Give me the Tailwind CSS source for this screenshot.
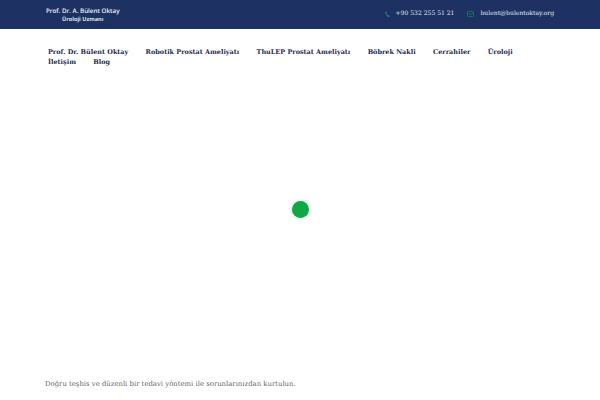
<!DOCTYPE html>
<html lang="tr">
<head>
    <meta charset="UTF-8">
    <title>Prof. Dr. A. Bülent Oktay</title>
    <script src="https://cdn.jsdelivr.net/npm/@tailwindcss/browser@4"></script>
</head>
<body class="bg-white w-[600px] h-[400px] overflow-hidden flex flex-col font-['DejaVu_Serif',serif] [text-rendering:geometricPrecision]">
    <header class="h-[29px] shrink-0 bg-[#1d3263] flex items-center justify-between pl-[46px] pr-[46px]">
        <div class="flex flex-col items-center text-white font-['Open_Sans',sans-serif] font-semibold mt-[-1px]">
            <span class="text-[6.250px] leading-[9px] text-[#eef1f6]">Prof. Dr. A. Bülent Oktay</span>
            <span class="text-[5.600px] leading-[8px] font-bold text-[#dfe4ee]">Üroloji Uzmanı</span>
        </div>
        <div class="flex items-center gap-[13px] text-[6.050px] text-[#e3e7f0] mt-[-1px]">
            <div class="flex items-center gap-[6px]">
                <svg class="w-[5px] h-[6px]" viewBox="0 0 10 12" fill="#1a8a62"><path d="M2.2 0.5 4 3.600 2.800 5c.5 1.500 1.400 2.800 2.800 3.800L7.400 8l2.100 2.800c-.8 1-2 1.500-3.200 1C3 10.300.6 6.500.7 2.500.8 1.500 1.300.8 2.200.5z"/></svg>
                <span>+90 532 255 51 21</span>
            </div>
            <div class="flex items-center gap-[6px]">
                <svg class="w-[7px] h-[6px]" viewBox="0 0 14 12" fill="none" stroke="#1a8a62" stroke-width="1.300"><rect x="1" y="1" width="12" height="10" rx="1.500"/><path d="M1 3.500 7 7.500 13 3.500"/></svg>
                <span>bulent@bulentoktay.org</span>
            </div>
        </div>
    </header>
    <nav class="pl-[48px] pr-[80px] pt-[18px] flex flex-wrap gap-x-[17.300px] text-[6.480px] leading-[10px] font-bold text-[#1d2a4d]">
        <a>Prof. Dr. Bülent Oktay</a>
        <a>Robotik Prostat Ameliyatı</a>
        <a>ThuLEP Prostat Ameliyatı</a>
        <a>Böbrek Nakli</a>
        <a>Cerrahiler</a>
        <a>Üroloji</a>
        <a>İletişim</a>
        <a>Blog</a>
    </nav>
    <main class="flex-1 flex items-center justify-center">
        <div class="w-[17px] h-[17px] rounded-full bg-[#0fa845] mt-[-27px] shadow-[0_0_4px_rgba(15,168,69,0.25)]"></div>
    </main>
    <p class="pl-[45px] pb-[10px] text-[6.900px] leading-[12px] text-[#666]">Doğru teşhis ve düzenli bir tedavi yöntemi ile sorunlarınızdan kurtulun.</p>
</body>
</html>
